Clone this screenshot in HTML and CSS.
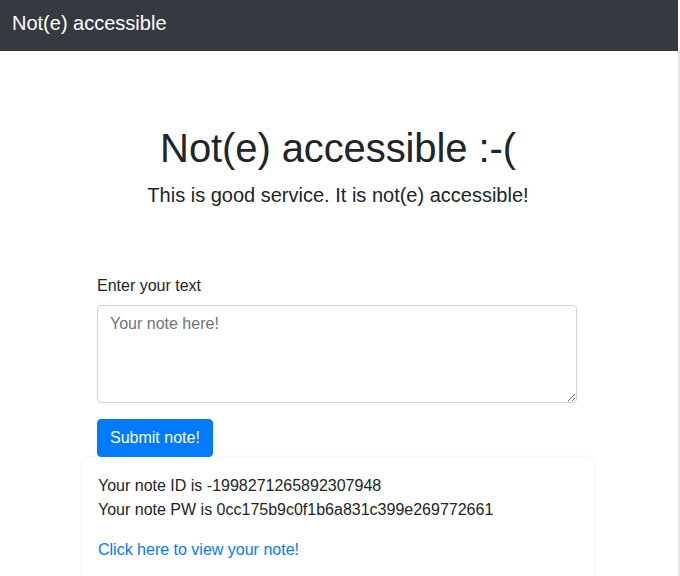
FILE: index.html
```html
<!DOCTYPE html>
<html lang="en">
<head>
<meta charset="utf-8">
<title>Not(e) accessible</title>
<link rel="stylesheet" href="styles.css">
</head>
<body>
<div class="page">
  <div class="main">
    <nav class="navbar"><a class="brand" href="#">Not(e) accessible</a></nav>
    <div class="content">
      <header class="hero">
        <h1 class="title">Not(e) accessible :-(</h1>
        <p class="lead">This is good service. It is not(e) accessible!</p>
      </header>
      <form class="note-form">
        <div class="form-group">
          <label class="label" for="note">Enter your text</label>
          <textarea id="note" class="field" placeholder="Your note here!"></textarea>
        </div>
        <button type="button" class="btn">Submit note!</button>
      </form>
      <div class="card">
        <p class="info">Your note ID is -1998271265892307948<br>Your note PW is 0cc175b9c0f1b6a831c399e269772661</p>
        <a class="link" href="#">Click here to view your note!</a>
      </div>
    </div>
  </div>
  <div class="strip"></div>
</div>
</body>
</html>
```
FILE: styles.css
```css
* { box-sizing: border-box; }
html, body { margin: 0; padding: 0; height: 576px; overflow: hidden; }
body {
  font-family: "Liberation Sans", Arial, sans-serif;
  font-size: 16px;
  line-height: 1.5;
  color: #212529;
  background: #fff;
}
.page { display: flex; height: 576px; }
.main { width: 678px; flex: none; }
.strip { width: 2px; flex: none; background: linear-gradient(#fdfdfd 0, #fdfdfd 51px, #e6e6e6 51px); }
.navbar {
  height: 51px;
  background: #343a40;
  padding: 8px 12px 0;
}
.brand {
  display: block;
  color: #fff;
  font-size: 20px;
  line-height: 30px;
  text-decoration: none;
}
.content { width: 676px; padding-top: 73px; }
.hero { text-align: center; }
.title {
  margin: 0 0 8px;
  font-size: 40px;
  font-weight: 400;
  line-height: 48px;
  letter-spacing: -0.1px;
}
.lead {
  margin: 0;
  font-size: 20px;
  font-weight: 300;
  line-height: 30px;
}
.note-form { width: 480px; margin: 63px auto 0; position: relative; left: -1px; }
.form-group { margin-bottom: 16px; }
.label { display: block; padding-top: 1px; margin-bottom: 7px; }
.field {
  display: block;
  width: 100%;
  height: 98px;
  padding: 6px 12px;
  font: inherit;
  color: #495057;
  border: 1px solid #ced4da;
  border-radius: 4px;
  resize: vertical;
}
.field::placeholder { color: #6c757d; opacity: 1; }
.btn {
  display: inline-block;
  font: inherit;
  color: #fff;
  background: #007bff;
  border: 1px solid #007bff;
  border-radius: 4px;
  padding: 6px 12px;
  line-height: 24px;
}
.card {
  width: 512px;
  margin: 0 auto;
  padding: 17px 16px 16px;
  border-radius: 4px;
  box-shadow: 0 0 3px rgba(0,0,0,0.09);
  height: 140px;
}
.info { margin: 0 0 16px; }
.link { color: #007bff; text-decoration: none; }
```
